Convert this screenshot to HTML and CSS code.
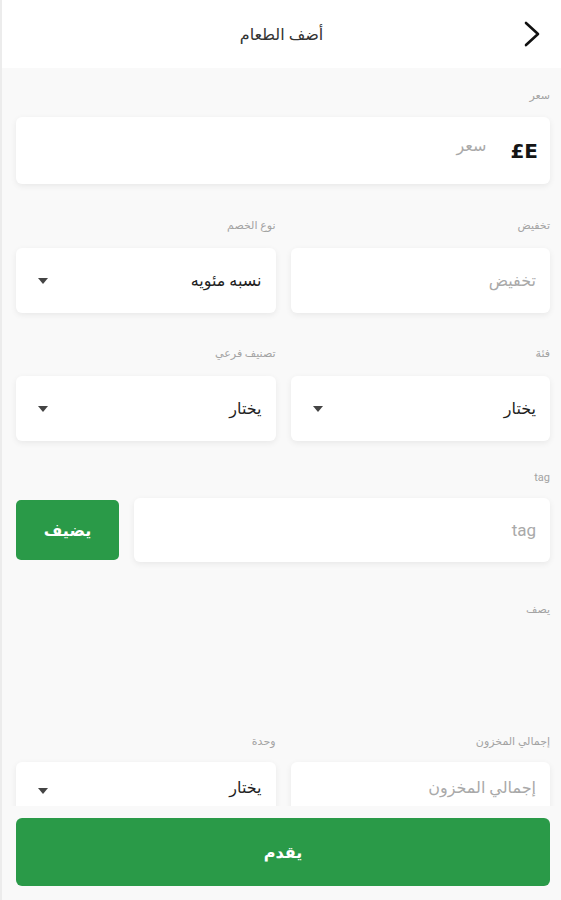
FILE: index.html
```html
<!DOCTYPE html>
<html lang="ar" dir="rtl">
  <head>
    <meta charset="UTF-8" />
    <meta name="viewport" content="width=device-width, initial-scale=1.0" />
    <title>أضف الطعام</title>
    <link rel="stylesheet" href="styles.css">
  </head>
  <body>
    <div class="screen">
      <div class="header">
        <button class="back_button">
          <svg width="20" height="28" viewBox="0 0 20 28">
            <path d="M4 3 L16 14 L4 25" fill="none" stroke="#111" stroke-width="2.6" stroke-linecap="round" stroke-linejoin="round" />
          </svg>
        </button>
        <h1 class="title">أضف الطعام</h1>
      </div>

      <div class="form">
        <div class="group group_first">
          <label class="label">سعر</label>
          <div class="field field_price">
            <span class="currency" dir="ltr">£E</span>
            <span class="placeholder">سعر</span>
          </div>
        </div>

        <div class="row group group_2">
          <div class="col">
            <label class="label">تخفيض</label>
            <div class="field"><span class="placeholder">تخفيض</span></div>
          </div>
          <div class="col">
            <label class="label">نوع الخصم</label>
            <div class="field select">
              <span class="value">نسبه مئويه</span>
              <span class="arrow"></span>
            </div>
          </div>
        </div>

        <div class="row group group_3">
          <div class="col">
            <label class="label">فئة</label>
            <div class="field select">
              <span class="value">يختار</span>
              <span class="arrow"></span>
            </div>
          </div>
          <div class="col">
            <label class="label">تصنيف فرعي</label>
            <div class="field select">
              <span class="value">يختار</span>
              <span class="arrow"></span>
            </div>
          </div>
        </div>

        <div class="group group_tag">
          <label class="label">tag</label>
          <div class="tag_row">
            <div class="field tag_input"><span class="placeholder latin">tag</span></div>
            <button class="add_button">يضيف</button>
          </div>
        </div>

        <div class="group group_desc">
          <label class="label">يصف</label>
          <div class="desc_area"></div>
        </div>

        <div class="row group group_stock">
          <div class="col">
            <label class="label">إجمالي المخزون</label>
            <div class="field field_low"><span class="placeholder">إجمالي المخزون</span></div>
          </div>
          <div class="col">
            <label class="label">وحدة</label>
            <div class="field select field_low">
              <span class="value">يختار</span>
              <span class="arrow"></span>
            </div>
          </div>
        </div>
      </div>

      <div class="footer">
        <button class="submit_button">يقدم</button>
      </div>
    </div>
  </body>
</html>
```

FILE: styles.css
```css
* {
  box-sizing: border-box;
}

html,
body {
  margin: 0;
  padding: 0;
}

body {
  font-family: Roboto, "DejaVu Sans", sans-serif;
  background-color: #f9f9f9;
}

.screen {
  display: flex;
  flex-direction: column;
  height: 900px;
  border-left: 2px solid #ececec;
  overflow: hidden;
}

/* header */
.header {
  height: 68px;
  background-color: #ffffff;
  display: flex;
  align-items: center;
  position: relative;
  flex-shrink: 0;
}

.back_button {
  background: none;
  border: none;
  padding: 0;
  margin-right: 19px;
  width: 20px;
  height: 28px;
  display: flex;
}

.title {
  position: absolute;
  left: 0;
  right: 0;
  text-align: center;
  margin: 0;
  font-size: 16px;
  font-weight: 400;
  color: #333;
  pointer-events: none;
}

/* form */
.form {
  flex: 1;
  overflow: hidden;
  padding: 20px 11px 0 14px;
}

.group {
  margin-top: 32px;
}

.group_first {
  margin-top: 0;
}

.group_2 {
  margin-top: 34px;
}

.group_3 {
  margin-top: 33px;
}

.group_tag {
  margin-top: 29px;
}

.group_desc {
  margin-top: 40px;
}

.label {
  display: block;
  height: 16px;
  line-height: 16px;
  font-size: 11px;
  color: #a3a3a3;
  margin-bottom: 14px;
}

.group_first .label {
  margin-bottom: 13px;
}

.group_tag .label,
.group_stock .label {
  margin-bottom: 12px;
}

.row {
  display: flex;
  gap: 15px;
}

.col {
  flex: 1;
  min-width: 0;
}

.field {
  height: 65px;
  background-color: #ffffff;
  border-radius: 6px;
  box-shadow: 0 2px 6px rgba(0, 0, 0, 0.07);
  display: flex;
  align-items: center;
  padding: 0 14px;
  font-size: 16px;
}

.field_low {
  align-items: flex-start;
  padding-top: 16px;
}

.field_low .arrow {
  margin-top: 10px;
}

.field_price {
  height: 67px;
  padding-right: 12px;
}

.currency {
  font-family: "DejaVu Sans", sans-serif;
  font-weight: 700;
  font-size: 20px;
  color: #151515;
  margin-left: 24px;
}

.placeholder {
  color: #a9a9a9;
}

.field_price .placeholder {
  margin-top: -10px;
}

.latin {
  font-family: Roboto, sans-serif;
  font-size: 17px;
}

.select {
  justify-content: space-between;
  padding-left: 22px;
}

.value {
  color: #1e1e1e;
}

.arrow {
  width: 0;
  height: 0;
  border-left: 5px solid transparent;
  border-right: 5px solid transparent;
  border-top: 6px solid #444;
}

.tag_row {
  display: flex;
  gap: 15px;
  align-items: center;
}

.tag_input {
  flex: 1;
  height: 64px;
}

.add_button {
  width: 103px;
  height: 60px;
  border: none;
  border-radius: 5px;
  background-color: #2a9a48;
  color: #ffffff;
  font-family: "DejaVu Sans", sans-serif;
  font-size: 16px;
  font-weight: 700;
}

.desc_area {
  height: 70px;
}

/* footer */
.footer {
  flex-shrink: 0;
  padding: 12px 11px 14px 14px;
  background-color: #f9f9f9;
}

.submit_button {
  width: 100%;
  height: 68px;
  border: none;
  border-radius: 6px;
  background-color: #2a9a48;
  color: #ffffff;
  font-family: "DejaVu Sans", sans-serif;
  font-size: 16px;
  font-weight: 700;
}
```
